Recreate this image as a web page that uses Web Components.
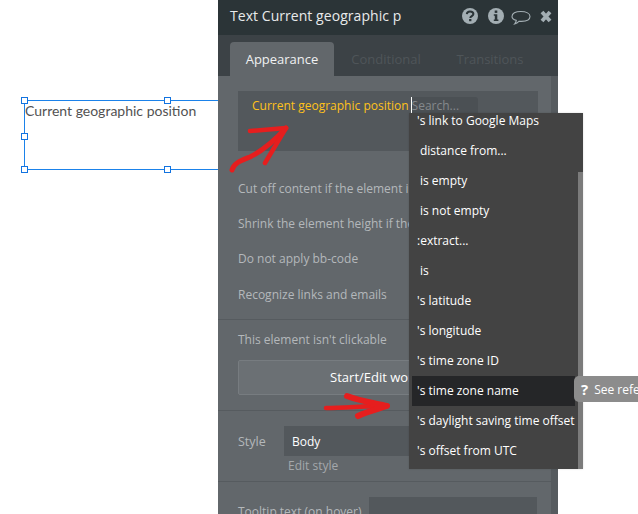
<!DOCTYPE html>
<html>
<head>
<meta charset="utf-8">
<title>Text Current geographic p</title>
<style>
  html, body { margin: 0; height: 100%; background: #fff; overflow: hidden; }
  body { font-family: "Open Sans", sans-serif; }
</style>
</head>
<body>
<editor-canvas>
  <selected-box>Current geographic position</selected-box>
  <property-panel heading="Text Current geographic p">
    <panel-row>Cut off content if the element is not visible</panel-row>
    <panel-row>Shrink the element height if the text is short</panel-row>
    <panel-row>Do not apply bb-code</panel-row>
    <panel-row>Recognize links and emails</panel-row>
  </property-panel>
  <op-menu></op-menu>
</editor-canvas>

<script>
class EditorCanvas extends HTMLElement {
  constructor() {
    super();
    this.attachShadow({ mode: 'open' });
    this.shadowRoot.innerHTML = `
      <style>
        :host { display: block; position: relative; width: 638px; height: 514px; overflow: hidden; background: #fff; }
        svg { position: absolute; left: 0; top: 0; pointer-events: none; }
        path { fill: none; stroke: #e61e1e; stroke-linecap: round; stroke-linejoin: round; }
      </style>
      <slot></slot>
      <svg width="638" height="514" viewBox="0 0 638 514">
        <path stroke-width="5" d="M232 170C234 163 240 161 250 157C262 151 276 139 286 128"/>
        <path stroke-width="4.5" d="M250 131L286 128L265 163"/>
        <path stroke-width="4.5" d="M326 408C345 408 365 406 387 406"/>
        <path stroke-width="6" d="M347 396C360 401 374 403 387 406C378 409 368 411 358 416"/>
      </svg>`;
  }
}

class SelectedBox extends HTMLElement {
  constructor() {
    super();
    this.attachShadow({ mode: 'open' });
    this.shadowRoot.innerHTML = `
      <style>
        :host { display: block; position: absolute; left: 24px; top: 100px; width: 210px; height: 70px;
          box-sizing: border-box; border: 1px solid #1b82ea; }
        .txt { font: 14px/20px Lato, sans-serif; color: #525252; }
        i { position: absolute; width: 5px; height: 5px; background: #fff; border: 1px solid #1273e0; }
      </style>
      <div class="txt"><slot></slot></div>
      <i style="left:-4px;top:-4px"></i>
      <i style="left:139px;top:-4px"></i>
      <i style="left:-4px;top:32px"></i>
      <i style="left:-4px;top:65px"></i>
      <i style="left:139px;top:65px"></i>`;
  }
}

class PanelRow extends HTMLElement {
  constructor() {
    super();
    this.attachShadow({ mode: 'open' });
    this.shadowRoot.innerHTML = `
      <style>
        :host { display: block; height: 35.2px; line-height: 35px; white-space: nowrap; color: #b4b8bb; font-size: 12px; }
      </style>
      <slot></slot>`;
  }
}

class PropertyPanel extends HTMLElement {
  constructor() {
    super();
    this.attachShadow({ mode: 'open' });
    const heading = this.getAttribute('heading');
    this.shadowRoot.innerHTML = `
      <style>
        :host { display: flex; flex-direction: column; position: absolute; left: 218px; top: 0; width: 340px; height: 514px;
          overflow: hidden; background: #62676b; font: 12px "Open Sans", sans-serif; }
        .head { flex: none; height: 35px; background: #2b3437; display: flex; align-items: center; padding: 0 4px 3px 12px; box-sizing: border-box; }
        .title { flex: 1; color: #e8eaeb; font-size: 14px; letter-spacing: .05px; white-space: nowrap; margin-bottom: 2px; }
        .icons { display: flex; align-items: center; }
        .tabs { flex: none; height: 41px; background: #3c4246; display: flex; align-items: flex-end; padding-left: 12px; font-size: 13px; }
        .tab { height: 34px; line-height: 34px; text-align: center; color: #4f5559; }
        .tab.on { width: 104px; background: #62676b; color: #f0f1f2; border-radius: 4px 4px 0 0; }
        .tab.c { margin-left: 17px; width: 70px; }
        .tab.t { margin-left: 35px; width: 68px; }
        .body { flex: 1; position: relative; padding: 15px 20px 0; }
        .strip { position: absolute; right: 0; top: 0; bottom: 0; width: 7px; background: #565b5f; }
        .expr { height: 60px; background: #53585c; display: flex; align-items: flex-start; padding: 6px 0 0 14px; box-sizing: border-box; }
        .expr .val { color: #ffc21a; line-height: 18px; white-space: nowrap; }
        .search { width: 67px; height: 20px; margin-left: 2px; line-height: 17px; box-sizing: border-box;
          background: #4b5054; color: #85898c; border-left: 1px solid #fff; border-radius: 0 3px 0 0; }
        .rows { margin-top: 20px; margin-bottom: 7px; }
        hr { border: 0; border-top: 1px solid #565b5f; margin: 0 -20px; }
        .clickable { color: #b4b8bb; margin-top: 10px; height: 20px; line-height: 20px; }
        .btn { height: 35px; margin-top: 10px; box-sizing: border-box; background: #6b7074; border: 1px solid #777c80; border-radius: 2px;
          color: #fff; text-align: center; line-height: 33px; white-space: nowrap; font-size: 13px; }
        .style-row { display: flex; margin-top: 15px; }
        .style-row label { width: 46px; color: #b4b8bb; line-height: 31px; font-size: 12.5px; }
        .select { width: 254px; height: 30px; background: #53585c; color: #fff; line-height: 31px; padding-left: 8px; box-sizing: border-box; }
        .edit { margin-left: 50px; height: 24px; line-height: 18px; color: #a4a8ab; }
        .tip { display: flex; margin-top: 15px; }
        .tip label { width: 131px; color: #b4b8bb; line-height: 30px; white-space: nowrap; }
        .tip div { width: 168px; height: 30px; background: #53585c; }
      </style>
      <div class="head">
        <div class="title">${heading}</div>
        <div class="icons">
          <svg width="100" height="24" viewBox="0 0 100 24">
            <circle cx="16" cy="12" r="8" fill="#a3aeb3"/>
            <path d="M12.8 10.2C13 8 14.5 7.4 16 7.4C18 7.4 19.4 8.5 19.4 10C19.4 12 16.3 12.2 16.3 14" fill="none" stroke="#2b3437" stroke-width="2"/>
            <rect x="15.1" y="15" width="2.3" height="2.2" fill="#2b3437"/>
            <circle cx="42" cy="12" r="8" fill="#a3aeb3"/>
            <rect x="40.7" y="6.5" width="2.6" height="2.4" fill="#2b3437"/>
            <path d="M39.8 10.3H43.3V15.5H44.4V17H39.8V15.5H40.8V11.8H39.8Z" fill="#2b3437"/>
            <path d="M58 12.5C58 9.4 61.4 7.5 66.8 7.5C72.2 7.5 76 9.5 76 12.6C76 15.6 72.6 17.4 67.5 17.4C66.6 17.4 65.9 17.3 65.2 17.2C64 18.4 62.6 19.5 60.6 20C61.6 18.8 62.2 17.6 62.3 16.4C59.2 15.6 58 14.2 58 12.5Z" fill="none" stroke="#a3aeb3" stroke-width="1.1"/>
            <path d="M88 8L96 17M96 8L88 17" fill="none" stroke="#a3aeb3" stroke-width="3.8"/>
          </svg>
        </div>
      </div>
      <div class="tabs">
        <div class="tab on">Appearance</div>
        <div class="tab c">Conditional</div>
        <div class="tab t">Transitions</div>
      </div>
      <div class="body">
        <div class="strip"></div>
        <div style="width:300px">
          <div class="expr"><span class="val">Current geographic position</span><span class="search">Search...</span></div>
          <div class="rows"><slot></slot></div>
        </div>
        <hr style="width:340px">
        <div style="width:300px">
          <div class="clickable">This element isn't clickable</div>
          <div class="btn">Start/Edit workflow</div>
        </div>
        <hr style="width:340px;margin-top:15px">
        <div style="width:300px">
          <div class="style-row"><label>Style</label><div class="select">Body</div></div>
          <div class="edit">Edit style</div>
        </div>
        <hr style="width:340px">
        <div style="width:300px">
          <div class="tip"><label>Tooltip text (on hover)</label><div></div></div>
        </div>
      </div>`;
  }
}

class OpMenu extends HTMLElement {
  constructor() {
    super();
    this.attachShadow({ mode: 'open' });
    const items = [
      ["'s link to Google Maps", 0], ['distance from...', 1], ['is empty', 1], ['is not empty', 1], [':extract...', 0], ['is', 1],
      ["'s latitude", 0], ["'s longitude", 0], ["'s time zone ID", 0], ["'s time zone name", 0, 1],
      ["'s daylight saving time offset", 0], ["'s offset from UTC", 0]
    ];
    const rows = items.map(([t, indent, on]) =>
      `<div class="item${indent ? ' ind' : ''}${on ? ' on' : ''}">${t}</div>`).join('');
    this.shadowRoot.innerHTML = `
      <style>
        :host { display: block; position: absolute; left: 409px; top: 113px; width: 174px; height: 356px;
          background: #434343; font: 12px "Open Sans", sans-serif; color: #fff; box-shadow: 0 0 2px rgba(0,0,0,.15); }
        .list { display: flex; flex-direction: column; margin-top: -7px; padding-left: 3px; }
        .item { height: 30px; line-height: 30px; width: 163px; padding-left: 5px; box-sizing: border-box; white-space: nowrap; }
        .item.ind { padding-left: 8px; }
        .item.on { background: #252628; }
        .bar { position: absolute; right: 0; top: 59px; bottom: 0; width: 5px; background: #7b7b7b; }
        .tooltip { position: absolute; left: 165px; top: 263px; width: 64px; height: 26px; overflow: hidden; box-sizing: border-box;
          background: #8c8c8c; border-radius: 5px 0 0 5px; line-height: 27px; padding-left: 7px; white-space: nowrap; font-size: 12px; }
        .tooltip b { font-size: 15px; margin-right: 6px; vertical-align: -1px; }
      </style>
      <div class="list">${rows}</div>
      <div class="bar"></div>
      <div class="tooltip"><b>?</b>See reference</div>`;
  }
}

customElements.define('editor-canvas', EditorCanvas);
customElements.define('selected-box', SelectedBox);
customElements.define('panel-row', PanelRow);
customElements.define('property-panel', PropertyPanel);
customElements.define('op-menu', OpMenu);
</script>
</body>
</html>
